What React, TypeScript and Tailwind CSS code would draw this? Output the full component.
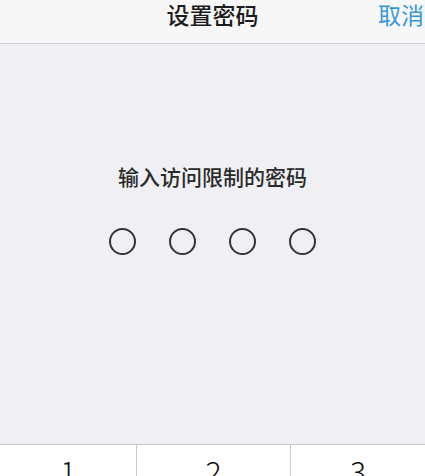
export default function App() {
  const keys = ['1', '2', '3']

  return (
    <div
      className="flex h-[476px] w-[425px] flex-col overflow-hidden bg-[#efeff4]"
      style={{ fontFamily: '"Noto Sans CJK SC", "Noto Sans", sans-serif' }}
    >
      {/* nav bar */}
      <div className="relative flex h-[44px] shrink-0 items-start justify-center border-b border-[#d4d4d8] bg-[#f7f7f8]">
        <h1 className="text-[23px] font-medium leading-[28px] text-[#1c1c1e]">设置密码</h1>
        <button className="absolute right-[1px] top-0 text-[23px] leading-[28px] text-[#3b97d3]">取消</button>
      </div>

      {/* passcode area */}
      <div className="flex flex-1 flex-col items-center">
        <p className="mt-[118px] text-[21px] font-medium leading-[28px] text-[#2a2a2a]">输入访问限制的密码</p>
        <div className="mt-[38px] flex gap-[33px]">
          {[0, 1, 2, 3].map((i) => (
            <div key={i} className="h-[27px] w-[27px] rounded-full border-[2px] border-[#333]" />
          ))}
        </div>
      </div>

      {/* keypad */}
      <div className="grid h-[32px] shrink-0 grid-cols-[137px_154px_1fr] border-t border-[#c8c8cc] bg-white">
        {keys.map((k, i) => (
          <div
            key={k}
            className={`flex justify-center pt-[8px] text-[30px] font-light leading-[34px] text-[#111] ${i < 2 ? 'border-r border-[#c8c8cc]' : ''}`}
          >
            {k}
          </div>
        ))}
      </div>
    </div>
  )
}
